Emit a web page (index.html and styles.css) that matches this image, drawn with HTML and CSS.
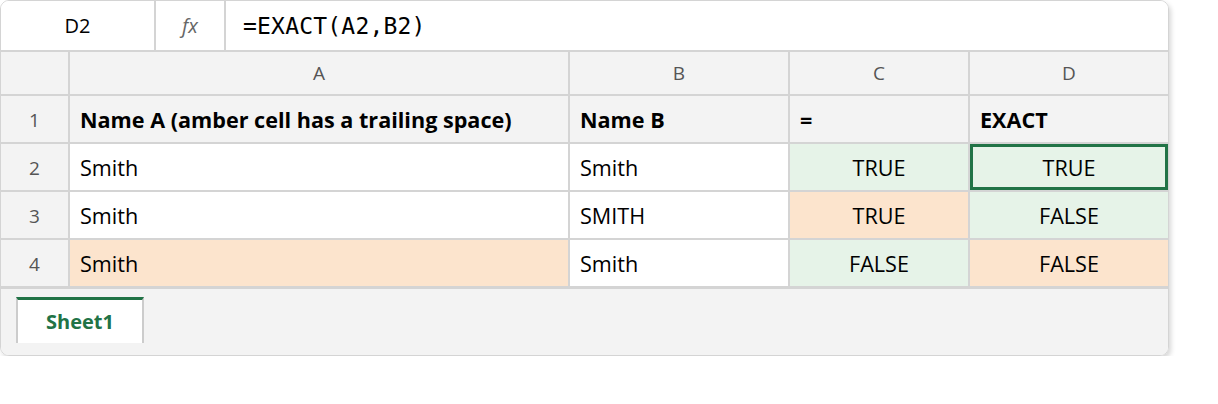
FILE: index.html
```html
<!DOCTYPE html>
<html lang="en">
<head>
  <meta charset="UTF-8" />
  <title>EXACT function</title>
  <link rel="stylesheet" href="styles.css">
</head>
<body>
  <div class="hoja">
    <div class="barra">
      <div class="nombre">D2</div>
      <div class="fx">fx</div>
      <div class="formula">=EXACT(A2,B2)</div>
    </div>

    <div class="rejilla">
      <div class="cab esquina"></div>
      <div class="cab">A</div>
      <div class="cab">B</div>
      <div class="cab">C</div>
      <div class="cab">D</div>

      <div class="num">1</div>
      <div class="celda negrita">Name A (amber cell has a trailing space)</div>
      <div class="celda negrita">Name B</div>
      <div class="celda negrita">=</div>
      <div class="celda negrita">EXACT</div>

      <div class="num">2</div>
      <div class="celda">Smith</div>
      <div class="celda">Smith</div>
      <div class="celda centro verde">TRUE</div>
      <div class="celda centro verde activa">TRUE</div>

      <div class="num">3</div>
      <div class="celda">Smith</div>
      <div class="celda">SMITH</div>
      <div class="celda centro ambar">TRUE</div>
      <div class="celda centro verde">FALSE</div>

      <div class="num">4</div>
      <div class="celda ambar">Smith</div>
      <div class="celda">Smith</div>
      <div class="celda centro verde">FALSE</div>
      <div class="celda centro ambar">FALSE</div>
    </div>

    <div class="pestanas">
      <div class="pestana">Sheet1</div>
    </div>
  </div>
</body>
</html>
```

FILE: styles.css
```css
body {
  margin: 0;
  font-family: "Open Sans", "Noto Sans", sans-serif;
  background: #ffffff;
  color: #000000;
}

.hoja {
  width: 1167px;
  border: 1px solid #d4d4d4;
  border-radius: 9px;
  overflow: hidden;
  box-shadow: 2px 3px 5px rgba(0, 0, 0, 0.16);
}

.barra {
  display: flex;
  height: 49px;
  background: #ffffff;
  border-bottom: 2px solid #d4d4d4;
}

.nombre {
  width: 153px;
  border-right: 2px solid #d4d4d4;
  display: flex;
  align-items: center;
  justify-content: center;
  font-size: 20px;
}

.fx {
  width: 68px;
  border-right: 2px solid #d4d4d4;
  display: flex;
  align-items: center;
  justify-content: center;
  font-size: 20px;
  font-style: italic;
  color: #666666;
}

.formula {
  display: flex;
  align-items: center;
  padding-left: 17px;
  font-family: "DejaVu Sans Mono", monospace;
  font-size: 23px;
  letter-spacing: 0.2px;
}

.rejilla {
  display: grid;
  grid-template-columns: 67px 498px 218px 178px 198px;
  grid-template-rows: 42px repeat(4, 46px);
  gap: 2px;
  background: #d4d4d4;
  border-bottom: 3px solid #d4d4d4;
}

.cab {
  background: #f3f3f3;
  color: #555555;
  font-size: 19px;
  display: flex;
  align-items: center;
  justify-content: center;
}

.num {
  background: #f3f3f3;
  color: #555555;
  font-size: 19px;
  display: flex;
  align-items: center;
  justify-content: center;
  padding-top: 1px;
}

.celda {
  background: #ffffff;
  font-size: 21.6px;
  display: flex;
  align-items: center;
  padding-left: 10px;
  padding-top: 1px;
}

.negrita {
  background: #f3f3f3;
  font-weight: bold;
}

.centro {
  justify-content: center;
  padding-left: 0;
}

.verde {
  background: #e6f3e8;
}

.ambar {
  background: #fce4cd;
}

.activa {
  box-shadow: inset 0 0 0 3px #217346;
}

.pestanas {
  height: 66px;
  background: #f3f3f3;
  padding-left: 15px;
  padding-top: 8px;
  box-sizing: border-box;
}

.pestana {
  width: 124px;
  height: 43px;
  background: #ffffff;
  border-top: 3px solid #217346;
  border-left: 2px solid #cccccc;
  border-right: 2px solid #cccccc;
  color: #217346;
  font-weight: bold;
  font-size: 20px;
  display: flex;
  align-items: center;
  justify-content: center;
}
```
